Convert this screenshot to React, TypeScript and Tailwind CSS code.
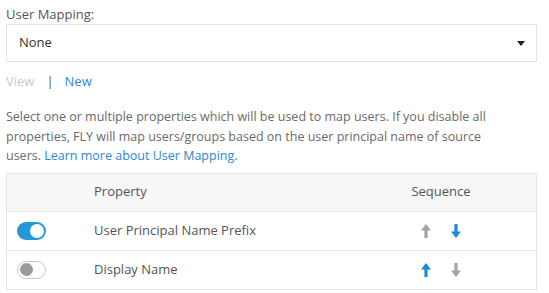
import React from "react";

function Arrow({ dir, active }: { dir: "up" | "down"; active: boolean }) {
  const color = active ? "#1f88d2" : "#a3a3a3";
  return (
    <svg width="10" height="14" viewBox="0 0 10 14" className={dir === "down" ? "rotate-180" : ""}>
      <path d="M5 0 L10 6.5 L6.6 6.5 L6.6 14 L3.4 14 L3.4 6.5 L0 6.5 Z" fill={color} />
    </svg>
  );
}

function Toggle({ on }: { on: boolean }) {
  return on ? (
    <div className="w-[29px] h-[18px] rounded-full bg-[#2596d8] flex items-center justify-end pr-[2px]">
      <div className="w-[14px] h-[14px] rounded-full bg-white" />
    </div>
  ) : (
    <div className="w-[29px] h-[18px] rounded-full bg-white border border-[#c8c8c8] flex items-center pl-[2px]">
      <div className="w-[13px] h-[13px] rounded-full bg-[#9a9a9a]" />
    </div>
  );
}

export default function App() {
  return (
    <div
      className="w-[549px] h-[293px] bg-white px-[6px] pt-[4px] text-[13px] text-[#555]"
      style={{ fontFamily: '"Open Sans", "Noto Sans", sans-serif' }}
    >
      <div className="leading-[20px]">User Mapping:</div>
      <div className="w-[531px] h-[38px] border border-[#e3e3e3] flex items-center justify-between pl-[12px] pr-[11px] text-[#333]">
        <span>None</span>
        <svg width="8" height="5" viewBox="0 0 8 5">
          <path d="M0 0 L8 0 L4 5 Z" fill="#222" />
        </svg>
      </div>
      <div className="mt-[9px] leading-[20px] flex items-center">
        <span className="text-[#c9c9c9]">View</span>
        <span className="text-[#555] ml-[12px] mr-[11px]">|</span>
        <span className="text-[#2a8ad4]">New</span>
      </div>
      <p className="mt-[16px] leading-[19.5px] text-[12.5px] text-[#6a6a6a]">
        Select one or multiple properties which will be used to map users. If you disable all
        <br />
        properties, FLY will map users/groups based on the user principal name of source
        <br />
        users. <span className="text-[#2a8ad4]">Learn more about User Mapping.</span>
      </p>
      <div className="mt-[7px] w-[531px] border border-[#e6e6e6]">
        <div className="h-[38px] bg-[#f7f7f7] flex items-center border-b border-[#e6e6e6] text-[#555]">
          <div className="w-[87px]" />
          <div className="flex-1">Property</div>
          <div className="w-[140px] text-center mr-[25px]">Sequence</div>
        </div>
        <div className="h-[39px] flex items-center border-b border-[#e6e6e6]">
          <div className="w-[87px] pl-[10px]">
            <Toggle on={true} />
          </div>
          <div className="flex-1 text-[#555]">User Principal Name Prefix</div>
          <div className="w-[140px] mr-[25px] flex justify-center gap-[20px]">
            <Arrow dir="up" active={false} />
            <Arrow dir="down" active={true} />
          </div>
        </div>
        <div className="h-[38px] flex items-center">
          <div className="w-[87px] pl-[10px]">
            <Toggle on={false} />
          </div>
          <div className="flex-1 text-[#555]">Display Name</div>
          <div className="w-[140px] mr-[25px] flex justify-center gap-[20px]">
            <Arrow dir="up" active={true} />
            <Arrow dir="down" active={false} />
          </div>
        </div>
      </div>
    </div>
  );
}
